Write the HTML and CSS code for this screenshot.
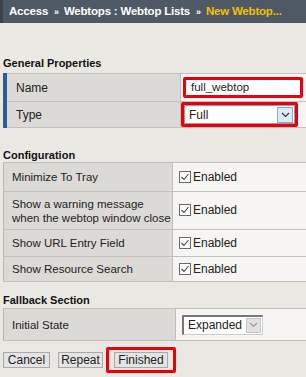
FILE: index.html
```html
<!DOCTYPE html>
<html lang="en">
<head>
    <meta charset="UTF-8">
    <title>New Webtop</title>
    <link rel="stylesheet" href="styles.css">
</head>
<body>

    <!-- Breadcrumb bar -->
    <div class="crumbs">
        <span>Access</span><span class="sep">&raquo;</span><span>Webtops : Webtop Lists</span><span class="sep">&raquo;</span><span class="current">New Webtop...</span>
    </div>

    <div class="content">

        <h4 class="section general">General Properties</h4>
        <table class="props general-table">
            <tr class="row-name">
                <td class="label marked">Name</td>
                <td class="value">
                    <span class="highlight name-box">full_webtop</span>
                </td>
            </tr>
            <tr class="row-type">
                <td class="label marked">Type</td>
                <td class="value">
                    <span class="highlight type-box">
                        <span class="select">
                            <span class="select-text">Full</span>
                            <span class="select-btn blue">
                                <svg width="9" height="6" viewBox="0 0 9 6"><path d="M1 1 L4.5 4.5 L8 1" fill="none" stroke="#333" stroke-width="1.2"/></svg>
                            </span>
                        </span>
                    </span>
                </td>
            </tr>
        </table>

        <h4 class="section config">Configuration</h4>
        <table class="props config-table">
            <tr class="r1">
                <td class="label">Minimize To Tray</td>
                <td class="value"><span class="check"><svg width="12" height="12" viewBox="0 0 12 12"><rect x="0.5" y="0.5" width="11" height="11" fill="#fff" stroke="#6a6a6a"/><path d="M2.5 6 L5 8.5 L9.5 3" fill="none" stroke="#444" stroke-width="1.1"/></svg>Enabled</span></td>
            </tr>
            <tr class="r2">
                <td class="label">Show a warning message<br>when the webtop window close</td>
                <td class="value"><span class="check"><svg width="12" height="12" viewBox="0 0 12 12"><rect x="0.5" y="0.5" width="11" height="11" fill="#fff" stroke="#6a6a6a"/><path d="M2.5 6 L5 8.5 L9.5 3" fill="none" stroke="#444" stroke-width="1.1"/></svg>Enabled</span></td>
            </tr>
            <tr class="r3">
                <td class="label">Show URL Entry Field</td>
                <td class="value"><span class="check"><svg width="12" height="12" viewBox="0 0 12 12"><rect x="0.5" y="0.5" width="11" height="11" fill="#fff" stroke="#6a6a6a"/><path d="M2.5 6 L5 8.5 L9.5 3" fill="none" stroke="#444" stroke-width="1.1"/></svg>Enabled</span></td>
            </tr>
            <tr class="r4">
                <td class="label">Show Resource Search</td>
                <td class="value"><span class="check"><svg width="12" height="12" viewBox="0 0 12 12"><rect x="0.5" y="0.5" width="11" height="11" fill="#fff" stroke="#6a6a6a"/><path d="M2.5 6 L5 8.5 L9.5 3" fill="none" stroke="#444" stroke-width="1.1"/></svg>Enabled</span></td>
            </tr>
        </table>

        <h4 class="section fallback">Fallback Section</h4>
        <table class="props fallback-table">
            <tr class="r1">
                <td class="label">Initial State</td>
                <td class="value">
                    <span class="select inset">
                        <span class="select-text">Expanded</span>
                        <span class="select-btn grey">
                            <svg width="9" height="6" viewBox="0 0 9 6"><path d="M1 1 L4.5 4.5 L8 1" fill="none" stroke="#999" stroke-width="1.2"/></svg>
                        </span>
                    </span>
                </td>
            </tr>
        </table>

        <div class="actions">
            <button class="cancel">Cancel</button>
            <button class="repeat">Repeat</button>
            <span class="highlight finish-box"><button class="finish">Finished</button></span>
        </div>

    </div>

</body>
</html>
```

FILE: styles.css
```css
body { margin: 0; background: #eae8e3; font-family: "Liberation Sans", Arial, sans-serif; font-size: 11.5px; color: #222; }

/* breadcrumb bar */
.crumbs { height: 23px; line-height: 23px; background: #4f5965; border-left: 3px solid #3a424c; padding-left: 6px; color: #fff; font-weight: bold; font-size: 11.5px; letter-spacing: -0.2px; white-space: nowrap; overflow: hidden; }
.crumbs .sep { font-size: 9px; margin: 0 5px 0 6px; }
.crumbs .current { color: #f2c200; }

.content { padding-left: 3px; }
.section { margin: 0; font-size: 11px; line-height: 14px; font-weight: bold; color: #111; }
.section.general { margin-top: 33px; height: 17px; }
.section.config { margin-top: 20px; height: 14px; }
.section.fallback { margin-top: 11px; height: 15px; }

.props { border-collapse: collapse; width: 303px; }
.props td { padding: 0; border-top: 1px solid #c2c0bb; border-bottom: 1px solid #c2c0bb; vertical-align: middle; }
.props .label { background: #dcdad6; border-left: 1px solid #b8b6b1; border-right: 1px solid #c2c0bb; padding-left: 8px; line-height: 14px; white-space: nowrap; }
.props .value { background: #f6f5f3; padding-left: 6px; }
.props .label.marked { border-left: 4px solid #2c5f91; padding-left: 9px; font-size: 12px; }

.general-table .label { width: 164px; }
.row-name td { height: 27px; }
.row-type td { height: 25px; }

.config-table .label { width: 160px; padding-right: 0; }
.config-table .r1 td { height: 28px; }
.config-table .r2 td { height: 37px; }
.config-table .r3 td { height: 26px; }
.config-table .r4 td { height: 24px; }

.fallback-table .label { width: 163px; }
.fallback-table td { height: 31px; }

/* red highlight boxes */
.highlight { display: inline-block; border: 3px solid #e8000b; border-radius: 2px; vertical-align: middle; }
.name-box { width: 104px; height: 15px; line-height: 15px; background: #fff; padding: 0 5px; margin-left: -4px; font-size: 11.5px; }
.type-box { margin-left: -6px; padding: 0; }

.select { display: inline-flex; align-items: center; background: #fff; border: 1px solid #9a9a9a; height: 17px; }
.select-text { padding-left: 4px; font-size: 12px; }
.type-box .select { width: 109px; justify-content: space-between; }
.select-btn { display: inline-flex; align-items: center; justify-content: center; width: 15px; height: 15px; margin-right: 1px; }
.select-btn.blue { background: #dce9f6; border: 1px solid #7eaad6; width: 14px; height: 14px; }
.select-btn.grey { background: #e2e2e2; border: 1px solid #c4c4c4; width: 13px; height: 13px; margin-left: 4px; }
.select.inset { border-top: 2px solid #777; border-left: 2px solid #777; border-right: 1px solid #ccc; border-bottom: 1px solid #ccc; }

.check { display: inline-flex; align-items: center; gap: 2px; font-size: 12px; }

.actions { display: flex; align-items: center; margin-top: 6px; }
.actions button { font-family: inherit; font-size: 12px; color: #222; background: #e4e4e4; border: 1px solid #a9a9a9; height: 16px; padding: 0 2px; line-height: 14px; }
.actions .cancel { width: 47px; margin-right: 8px; }
.actions .repeat { width: 45px; margin-right: 3px; }
.finish-box { padding: 2px 5px; }
.actions .finish { width: 54px; }
```
